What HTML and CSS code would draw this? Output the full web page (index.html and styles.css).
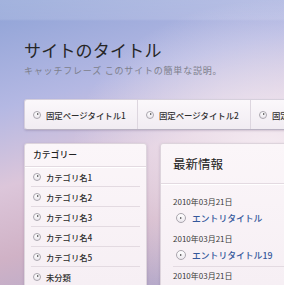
FILE: index.html
```html
<!DOCTYPE html>
<html lang="ja">
<head>
    <meta charset="UTF-8">
    <meta name="viewport" content="width=device-width, initial-scale=1.0">
    <title>サイトのタイトル</title>
    <link rel="stylesheet" href="styles.css">
</head>
<body>
    <div class="page">
        <header class="site-header">
            <h1 class="site-title">サイトのタイトル</h1>
            <p class="tagline">キャッチフレーズ このサイトの簡単な説明。</p>
        </header>

        <nav class="global-nav">
            <a class="nav-item" href="#"><span class="arrow"></span>固定ページタイトル1</a>
            <a class="nav-item" href="#"><span class="arrow"></span>固定ページタイトル2</a>
            <a class="nav-item" href="#"><span class="arrow"></span>固定ページタイトル3</a>
        </nav>

        <div class="columns">
            <aside class="sidebar">
                <h3 class="box-title">カテゴリー</h3>
                <ul class="cat-list">
                    <li><span class="arrow"></span>カテゴリ名1</li>
                    <li><span class="arrow"></span>カテゴリ名2</li>
                    <li><span class="arrow"></span>カテゴリ名3</li>
                    <li><span class="arrow"></span>カテゴリ名4</li>
                    <li><span class="arrow"></span>カテゴリ名5</li>
                    <li><span class="arrow"></span>未分類</li>
                </ul>
            </aside>

            <main class="main-box">
                <h2 class="main-title">最新情報</h2>
                <div class="entries">
                    <div class="entry-group">
                        <div class="entry">
                            <div class="date">2010年03月21日</div>
                            <a class="entry-title" href="#"><span class="arrow big"></span>エントリタイトル</a>
                        </div>
                        <div class="entry">
                            <div class="date">2010年03月21日</div>
                            <a class="entry-title" href="#"><span class="arrow big"></span>エントリタイトル19</a>
                        </div>
                    </div>
                    <div class="entry-group">
                        <div class="entry">
                            <div class="date">2010年03月21日</div>
                            <a class="entry-title" href="#"><span class="arrow big"></span>エントリタイトル18</a>
                        </div>
                    </div>
                </div>
            </main>
        </div>
    </div>
</body>
</html>
```

FILE: styles.css
```css
html, body {
    margin: 0;
    padding: 0;
    height: 100%;
    overflow: hidden;
}

body {
    font-family: "Noto Sans CJK JP", "Noto Sans", sans-serif;
    color: #333;
    background:
        linear-gradient(to bottom, rgba(255,255,255,0.18) 0, rgba(255,255,255,0.12) 19px, rgba(255,255,255,0) 21px),
        radial-gradient(ellipse 70% 55% at 95% 55%, rgba(248,240,245,0.95) 0%, rgba(248,240,245,0) 100%),
        linear-gradient(165deg, #8ea2d6 0%, #b4b8e3 30%, #dcc6da 52%, #d0b2c6 72%, #a9a6cc 100%);
}

.page {
    width: 420px;
    padding-left: 24px;
}

.site-header {
    padding-top: 40px;
}

.site-title {
    margin: 0;
    font-size: 17px;
    font-weight: normal;
    line-height: 20px;
    color: #262626;
    letter-spacing: 0.2px;
}

.tagline {
    margin: 5px 0 0;
    font-size: 9px;
    line-height: 12px;
    color: #7d7f8c;
    letter-spacing: 0.8px;
}

.global-nav {
    display: flex;
    margin-top: 22px;
    height: 31px;
    background: linear-gradient(to bottom, #fbf8fb, #f1ecf2);
    border: 1px solid #d6d0dc;
    border-bottom-color: #b9b2c2;
    border-radius: 3px;
    box-shadow: 0 1px 2px rgba(80, 60, 100, 0.2);
    box-sizing: border-box;
}

.nav-item {
    display: flex;
    align-items: center;
    width: 113px;
    flex-shrink: 0;
    padding-left: 8px;
    box-sizing: border-box;
    border-right: 1px solid #ddd6df;
    font-size: 8.4px;
    font-weight: 500;
    color: #2e2e2e;
    text-decoration: none;
}

.arrow {
    display: inline-block;
    width: 6px;
    height: 6px;
    margin-right: 5px;
    border: 1px solid #aaa6ae;
    border-radius: 50%;
    background: linear-gradient(to bottom, #fff, #ece8ee);
    position: relative;
    flex-shrink: 0;
}

.arrow::after {
    content: "";
    position: absolute;
    left: 2.5px;
    top: 1.5px;
    border-left: 2px solid #444;
    border-top: 1.5px solid transparent;
    border-bottom: 1.5px solid transparent;
}

.arrow.big {
    width: 8px;
    height: 8px;
    margin-right: 6px;
}

.arrow.big::after {
    left: 3.3px;
    top: 2.5px;
}

.columns {
    display: flex;
    gap: 13px;
    margin-top: 13px;
}

.sidebar,
.main-box {
    background: linear-gradient(to bottom, #fbf6f9, #f4ecf2);
    border: 1px solid #ddd4dc;
    border-radius: 3px;
    box-shadow: 0 1px 3px rgba(80, 60, 100, 0.2);
    height: 200px;
}

.sidebar {
    width: 123px;
    flex-shrink: 0;
    box-sizing: border-box;
}

.box-title {
    margin: 0;
    height: 22px;
    line-height: 22px;
    padding-left: 8px;
    font-size: 8.8px;
    font-weight: 500;
    color: #222;
    border-bottom: 1px solid #e3dae1;
    box-shadow: 0 1px 0 #fff;
}

.cat-list {
    list-style: none;
    margin: 0;
    padding: 0 6px;
}

.cat-list li {
    display: flex;
    align-items: center;
    height: 19px;
    padding-left: 2px;
    font-size: 8.3px;
    font-weight: 500;
    color: #2e2e2e;
    border-bottom: 1px solid #e3dae1;
}

.main-box {
    width: 300px;
    flex-shrink: 0;
    box-sizing: border-box;
}

.main-title {
    margin: 0;
    height: 39px;
    line-height: 39px;
    padding-left: 12px;
    font-size: 12.5px;
    font-weight: normal;
    color: #222;
    border-bottom: 1px solid #e3dae1;
    box-shadow: 0 1px 0 #fff;
}

.entries {
    padding: 0 12px;
}

.entry-group {
    padding-top: 12px;
    padding-bottom: 3px;
    border-bottom: 1px solid #e3dae1;
}

.entry-group + .entry-group {
    padding-top: 3px;
}

.entry {
    margin-bottom: 7px;
}

.entry:last-child {
    margin-bottom: 0;
}

.date {
    font-size: 8px;
    line-height: 12px;
    color: #3a3a3a;
}

.entry-title {
    display: flex;
    align-items: center;
    margin-top: 2px;
    padding-left: 3px;
    height: 16px;
    font-size: 8.8px;
    font-weight: 500;
    color: #34589b;
    text-decoration: none;
}
```
